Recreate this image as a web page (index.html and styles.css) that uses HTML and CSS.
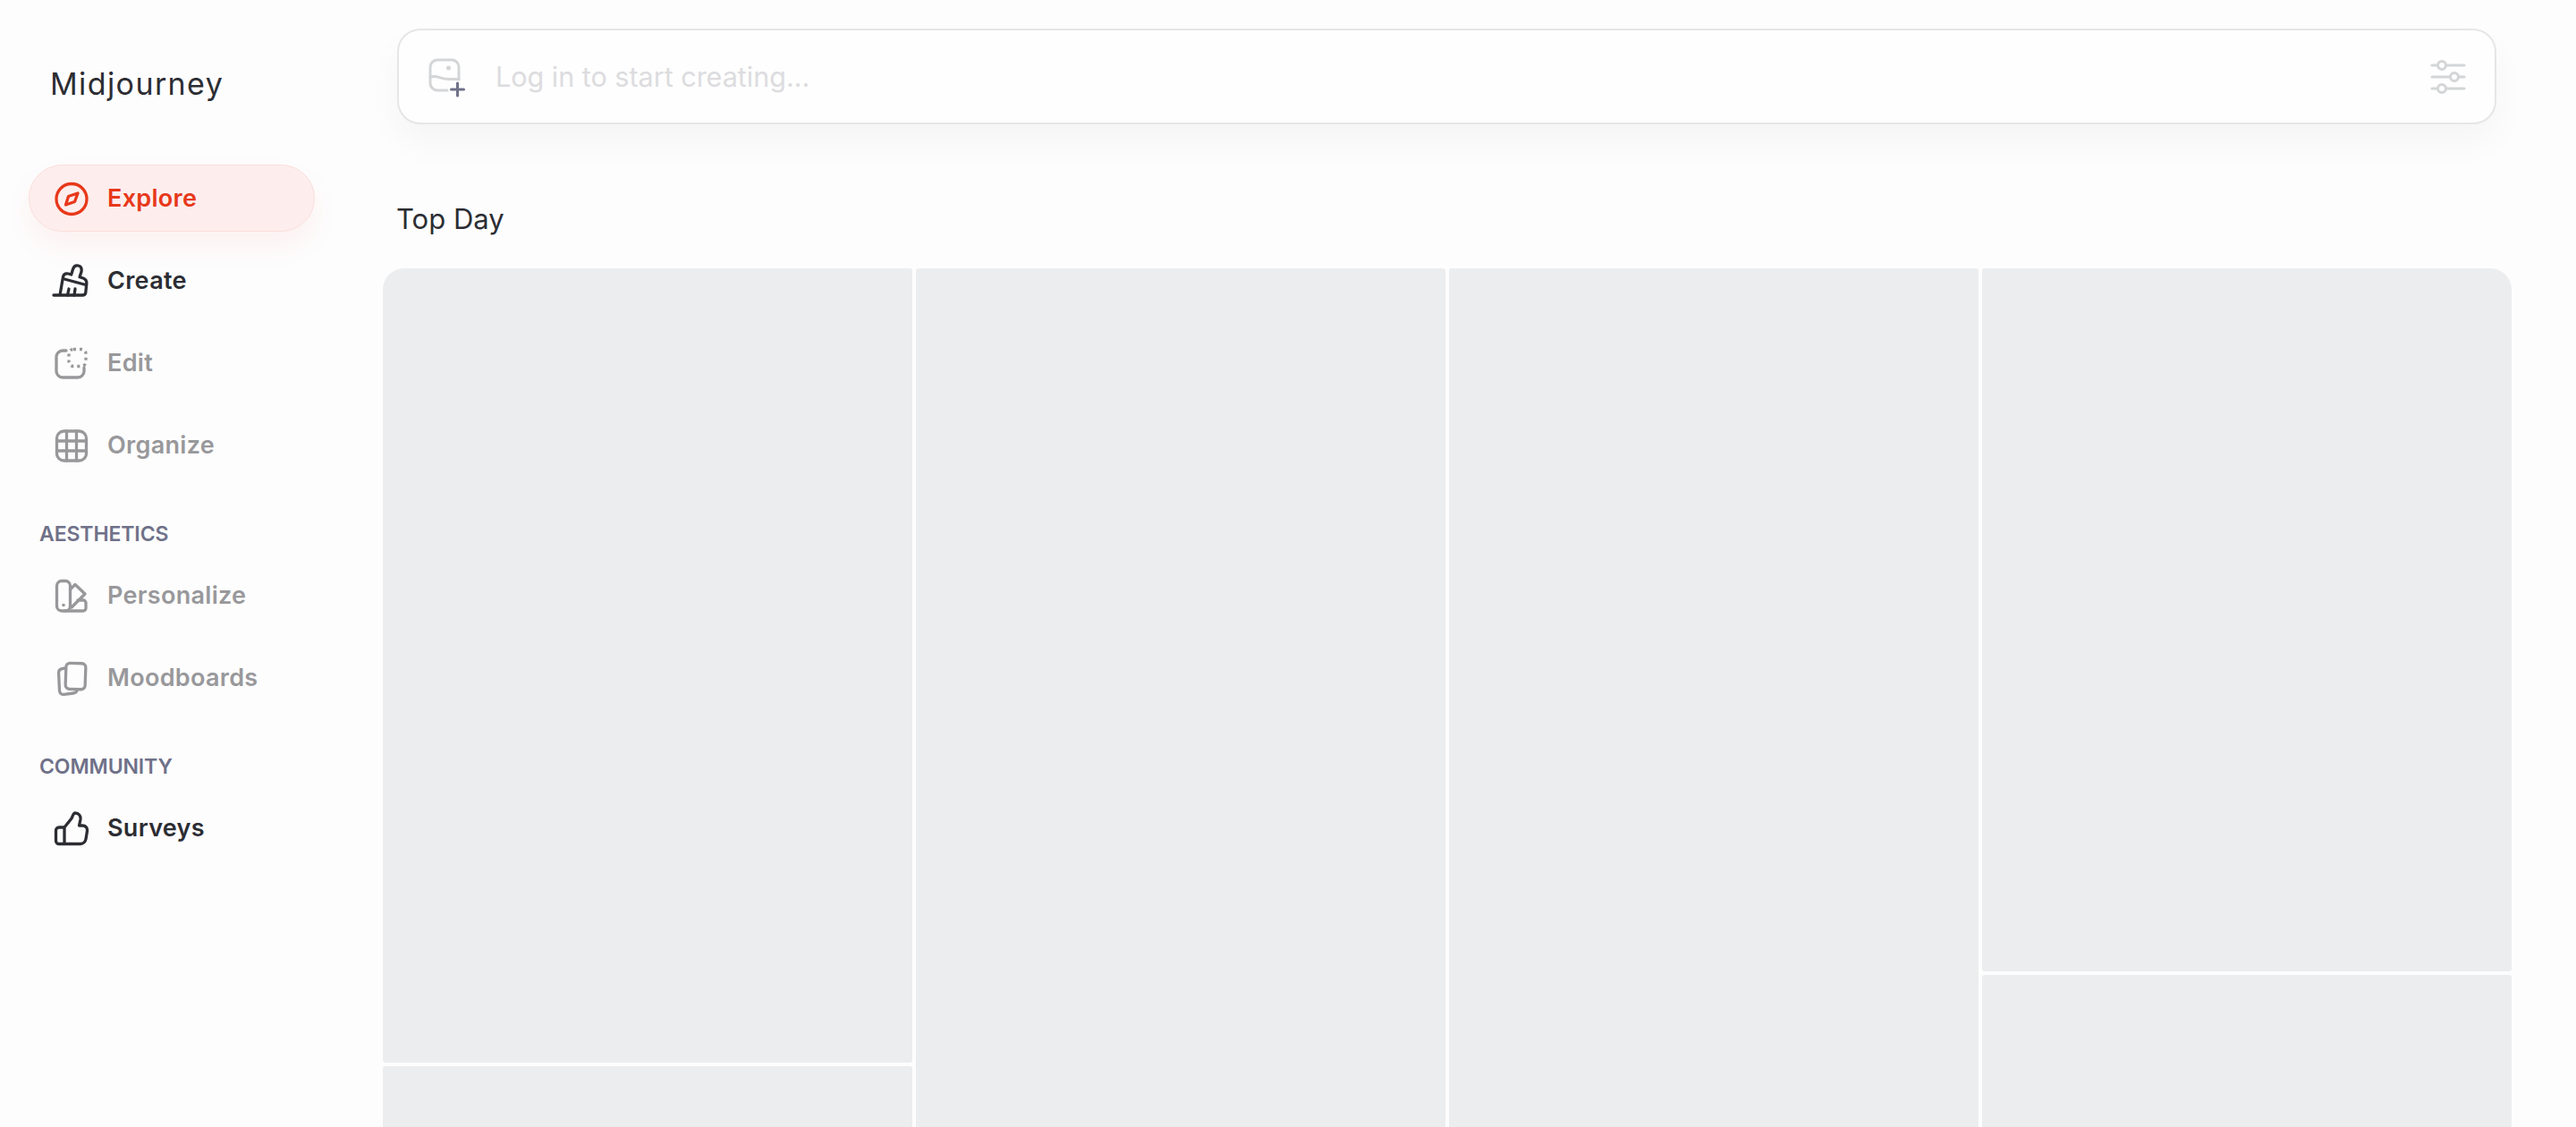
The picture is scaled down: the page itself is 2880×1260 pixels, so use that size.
FILE: index.html
```html
<!DOCTYPE html>
<html lang="en">
<head>
    <meta charset="UTF-8">
    <meta name="viewport" content="width=device-width, initial-scale=1.0">
    <title>Midjourney</title>

    <link rel="stylesheet" href="styles.css">
</head>
<body class="page">
    <div class="sideBar">
        <p class="logo">Midjourney</p>

        <a class="navItem navItemActive" href="#">
            <svg class="navIcon" viewBox="0 0 40 40">
                <circle cx="20" cy="20.5" r="17" />
                <path d="M27 14 L23.500 23.500 L13.500 27 L16.500 17.500 Z" />
            </svg>
            <span>Explore</span>
        </a>
        <a class="navItem" href="#">
            <svg class="navIcon" viewBox="0 0 40 40">
                <path d="M0 36 H32 Q35.500 36 35.800 33 L36.800 23 Q37 18.500 33 17 L29 15.700 L31 9.700 Q32 4 27.500 3 Q23 2 21.500 7 L19.700 13 L16.400 12 Q11.500 11 10.500 15.500 L7 36" />
                <path d="M12 18 L36 24.500 M15.500 36 L17 29 M23 36 L24 29" />
            </svg>
            <span>Create</span>
        </a>
        <a class="navItem navItemMuted" href="#">
            <svg class="navIcon" viewBox="0 0 40 40">
                <path d="M14 6 H10 a7 7 0 0 0 -7 7 V29 a7 7 0 0 0 7 7 H27 a7 7 0 0 0 7 -7 V25" />
                <rect class="dashed" x="17" y="4.500" width="19" height="19" rx="5" />
            </svg>
            <span>Edit</span>
        </a>
        <a class="navItem navItemMuted" href="#">
            <svg class="navIcon" viewBox="0 0 40 40">
                <rect x="3.500" y="4" width="33" height="33" rx="8" />
                <path d="M14.500 4 V37 M25.500 4 V37 M3.500 15 H36.500 M3.500 26 H36.500" />
            </svg>
            <span>Organize</span>
        </a>

        <p class="sectionLabel">AESTHETICS</p>
        <a class="navItem navItemMuted" href="#">
            <svg class="navIcon" viewBox="0 0 40 40">
                <rect x="3.500" y="3.500" width="15" height="33.500" rx="5.500" />
                <path d="M18.500 13 L24 7.500 L35 18 L20 33 M27 25 H33 a3 3 0 0 1 3 3 V34 a3 3 0 0 1 -3 3 H13" />
                <circle class="dot" cx="11" cy="30.500" r="1.800" />
            </svg>
            <span>Personalize</span>
        </a>
        <a class="navItem navItemMuted" href="#">
            <svg class="navIcon" viewBox="0 0 40 40">
                <rect x="13.500" y="3.500" width="22" height="29" rx="4.500" transform="rotate(2 24 18)" />
                <path d="M13 9 L10 9.500 c-3 .4 -4.500 2 -4.400 5 L6.500 34 c.2 3 2.300 4.800 5.200 4.400 L22 37 c2.500 -.3 4 -1.500 4.500 -4" />
            </svg>
            <span>Moodboards</span>
        </a>

        <p class="sectionLabel">COMMUNITY</p>
        <a class="navItem" href="#">
            <svg class="navIcon" viewBox="0 0 40 40">
                <path d="M11.500 19 H6 a3.500 3.500 0 0 0 -3.500 3.500 V34 a3.500 3.500 0 0 0 3.500 3.500 H11.500" />
                <path d="M12 37.500 V19 L20 9 c1 -2 2 -6 4 -6 c4 0 6.500 3 6 7 l-1.500 7 h3.500 c4 0 6 3 5.500 6 l-1.500 9 c-.5 3 -3 5.500 -6 5.500 Z" />
            </svg>
            <span>Surveys</span>
        </a>
    </div>

    <div class="mainArea">
        <div class="promptBar">
            <svg class="promptIcon" viewBox="0 0 44 44">
                <path d="M22 37 H11 a8 8 0 0 1 -8 -8 V11 a8 8 0 0 1 8 -8 H27 a8 8 0 0 1 8 8 V25" />
                <path d="M3 22 c8 -2 12 2.500 21 2.500 h11" />
                <circle class="dot" cx="23.500" cy="12" r="2.500" />
                <path class="plus" d="M33.500 29 V43 M26.500 36 H40.500" />
            </svg>
            <span class="promptText">Log in to start creating...</span>
            <svg class="promptIcon" viewBox="0 0 40 40">
                <path d="M2 7 H38 M2 20 H38 M2 33 H38" />
                <circle cx="13" cy="7" r="4.500" />
                <circle cx="27" cy="20" r="4.500" />
                <circle cx="13" cy="33" r="4.500" />
            </svg>
        </div>

        <h1 class="sectionTitle">Top Day</h1>

        <div class="tileGrid">
            <div class="tileColumn">
                <div class="tile tileFirstShort"></div>
                <div class="tile"></div>
            </div>
            <div class="tileColumn">
                <div class="tile tileFull"></div>
            </div>
            <div class="tileColumn">
                <div class="tile tileFull"></div>
            </div>
            <div class="tileColumn">
                <div class="tile tileFourthShort"></div>
                <div class="tile"></div>
            </div>
        </div>
    </div>
</body>
</html>
```

FILE: styles.css
```css
html, body{
    height: 100%;
}

.page{
    display: flex;
    margin: 0;
    height: 1260px;
    overflow: hidden;
    background-color: #fdfdfd;
    font-family: Inter, 'Liberation Sans', sans-serif;
    color: #2c2d33;
}

.sideBar{
    display: flex;
    flex-direction: column;
    flex: 0 0 428px;
    box-sizing: border-box;
    padding: 70px 76px 0 32px;
}

.logo{
    margin: 0 0 66px 24px;
    height: 48px;
    line-height: 48px;
    font-size: 34px;
    font-weight: 400;
    letter-spacing: 1.400px;
    white-space: nowrap;
}

.navItem{
    display: flex;
    align-items: center;
    gap: 20px;
    box-sizing: border-box;
    height: 75px;
    margin-bottom: 17px;
    padding-left: 27px;
    border: 1px solid transparent;
    border-radius: 38px;
    font-size: 27px;
    font-weight: 600;
    letter-spacing: 0.300px;
    color: #2c2d33;
    text-decoration: none;
}

.navItemActive{
    color: #e8381a;
    background-color: #fdeeed;
    border-color: #fbdedb;
    box-shadow: 0 16px 32px rgba(232, 56, 26, 0.06);
}

.navItemMuted{
    color: #98989b;
}

.navIcon{
    flex: none;
    width: 40px;
    height: 40px;
    overflow: visible;
    fill: none;
    stroke: currentColor;
    stroke-width: 3.300;
    stroke-linecap: round;
    stroke-linejoin: round;
}

.navIcon .dashed{
    stroke-linecap: butt;
    stroke-dasharray: 3 4;
}

.dot{
    fill: currentColor;
    stroke: none;
}

.sectionLabel{
    margin: 29px 0 15px 12px;
    height: 32px;
    line-height: 32px;
    font-size: 23px;
    font-weight: 600;
    letter-spacing: -0.100px;
    color: #6f7189;
}

.mainArea{
    display: flex;
    flex-direction: column;
    flex: 1;
    min-width: 0;
    padding: 32px 72px 0 0;
}

.promptBar{
    display: flex;
    align-items: center;
    box-sizing: border-box;
    height: 107px;
    margin: 0 17px 0 16px;
    padding: 0 32px;
    border: 2px solid #e6e6e8;
    border-radius: 26px;
    background-color: #fefefe;
    box-shadow: 0 20px 40px rgba(0, 0, 0, 0.035);
}

.promptIcon{
    flex: none;
    width: 40px;
    height: 40px;
    overflow: visible;
    fill: #fefefe;
    stroke: #d4d5d7;
    stroke-width: 3;
    stroke-linecap: round;
}

.promptIcon:first-child{
    width: 44px;
    height: 44px;
    fill: none;
}

.promptIcon .dot{
    fill: #d4d5d7;
}

.promptIcon .plus{
    stroke: #6f7189;
}

.promptText{
    flex: 1;
    margin-left: 32px;
    font-size: 30.500px;
    color: #dcdcdf;
}

.sectionTitle{
    height: 48px;
    margin: 82px 0 31px 15px;
    line-height: 48px;
    font-size: 31px;
    font-weight: 400;
}

.tileGrid{
    display: grid;
    grid-template-columns: repeat(4, 592px);
    gap: 4px;
    flex: 1;
    min-height: 0;
    overflow: hidden;
    border-radius: 24px 24px 0 0;
}

.tileColumn{
    display: flex;
    flex-direction: column;
    gap: 4px;
}

.tile{
    flex: none;
    height: 400px;
    border-radius: 3px;
    background-color: #ecedee;
}

.tileFull{
    height: 1000px;
}

.tileFirstShort{
    height: 888px;
}

.tileFourthShort{
    height: 786px;
}
```
